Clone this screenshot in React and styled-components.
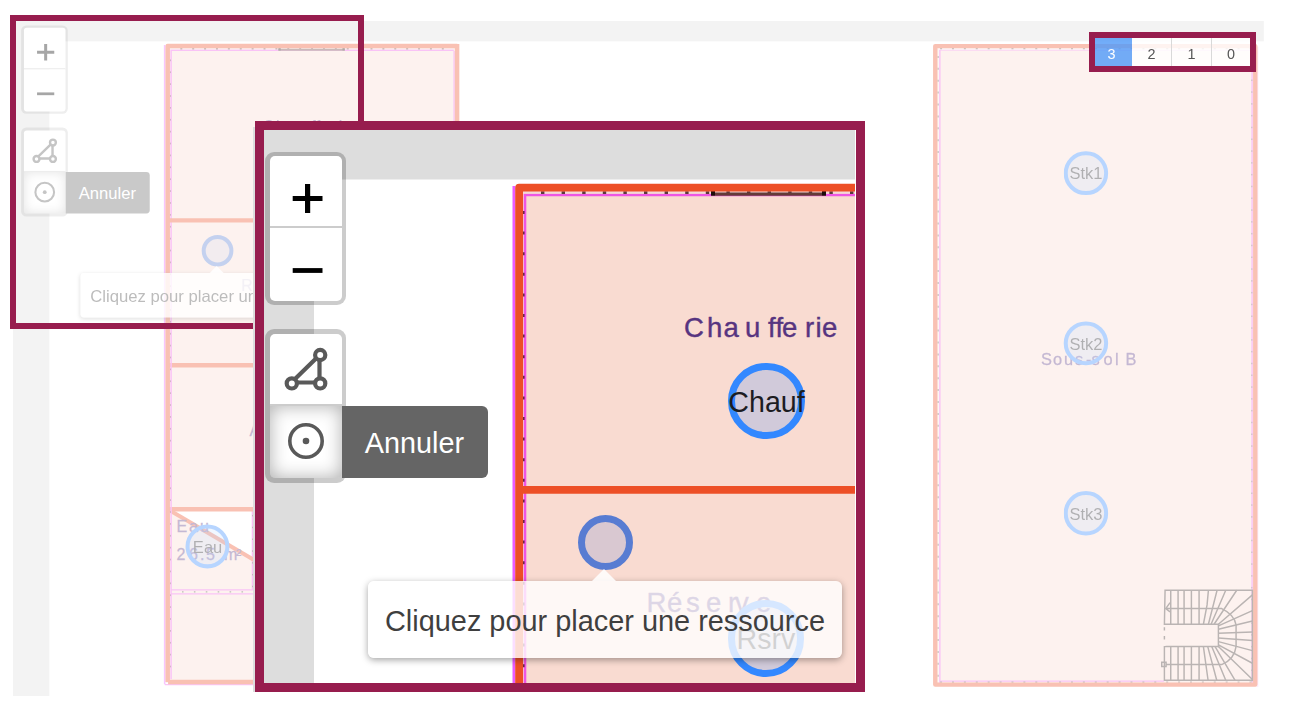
import React from "react";
import styled, { createGlobalStyle } from "styled-components";

const Global = createGlobalStyle`
  * { box-sizing: border-box; }
  body { margin: 0; background: #fff; font-family: "Liberation Sans", Arial, sans-serif; }
`;

const ACCENT = "#971d4e";
const WALL = "#ed4f26";
const MAGENTA = "#ee55e4";
const ROOM = "#f9dbd1";
const INK = "#573480";

const Page = styled.main`
  position: relative;
  width: 1292px;
  height: 712px;
  padding: 21px 28px 16px 13px;
  overflow: hidden;
  background: #fff;
`;

const FadedMap = styled.section`
  width: 1251px;
  height: 675px;
  overflow: hidden;
  opacity: 0.35;
`;

const Scene = styled.div`
  position: relative;
  width: 2168px;
  height: 1190px;
  margin: ${(p) => p.$margin};
  transform: scale(${(p) => p.$scale});
  transform-origin: 0 0;
`;

const PlanSvg = styled.svg`
  display: block;
  width: 100%;
  height: 100%;
`;

const Frame = styled.div`
  position: absolute;
  left: ${(p) => p.$x}px;
  top: ${(p) => p.$y}px;
  width: ${(p) => p.$w}px;
  height: ${(p) => p.$h}px;
  border: ${(p) => p.$line || 6}px solid ${ACCENT};
`;

const InsetFrame = styled(Frame)`
  &::before {
    content: "";
    position: absolute;
    left: -11px;
    top: -3px;
    bottom: -9px;
    width: 2px;
    background: #ddd;
  }
`;

const InsetView = styled.div`
  width: 100%;
  height: 100%;
  overflow: hidden;
  background: #fff;
  border-right: 1px solid #fff;
`;

const Controls = styled.div`
  position: absolute;
  left: 14px;
  top: 24.5px;
  display: flex;
  flex-direction: column;
  gap: 24px;
`;

const ButtonGroup = styled.div`
  display: flex;
  flex-direction: column;
  width: 81px;
  height: 153.5px;
  padding: 4.5px;
  border-radius: 9px;
  background: rgba(0, 0, 0, 0.2);
`;

const MapButton = styled.button`
  position: relative;
  flex: 0 0 50%;
  min-height: 0;
  display: grid;
  place-items: start center;
  padding: 0;
  border: 0;
  background: #fff;
  box-shadow: ${(p) => (p.$pressed ? "inset 0 0 18px rgba(0,0,0,0.32)" : "none")};
  &:first-child { border-radius: 5px 5px 0 0; border-bottom: 2px solid #ccc; }
  &:last-child { border-radius: 0 0 5px 5px; }
`;

const Glyph = styled.svg`
  display: block;
  width: 72px;
  height: 70px;
  overflow: visible;
`;

const Flyout = styled.span`
  position: absolute;
  left: 72px;
  top: 0;
  display: flex;
  align-items: center;
  justify-content: center;
  width: 146px;
  height: 72px;
  padding-top: 3px;
  border-radius: 0 6px 6px 0;
  background: #656565;
  color: #fff;
  font: 28.8px "Liberation Sans", Arial, sans-serif;
`;

const Marker = styled.div`
  position: absolute;
  left: ${(p) => p.$x - 251 - p.$r}px;
  top: ${(p) => p.$y - 127 - p.$r}px;
  width: ${(p) => p.$r * 2}px;
  height: ${(p) => p.$r * 2}px;
  display: flex;
  align-items: center;
  justify-content: center;
  padding-top: 3px;
  border: 7px solid ${(p) => (p.$pending ? "#587cd2" : "#3388ff")};
  border-radius: 50%;
  background: ${(p) => (p.$pending ? "rgba(88,124,210,0.2)" : "rgba(51,136,255,0.2)")};
  color: #1c1c22;
  font-size: 28.6px;
  white-space: nowrap;
`;

const Hint = styled.div`
  position: absolute;
  left: 117px;
  top: 454px;
  display: flex;
  align-items: center;
  justify-content: center;
  width: 474px;
  height: 77px;
  padding-top: 3px;
  border-radius: 6px;
  background: rgba(255, 255, 255, 0.8);
  box-shadow: 0 2px 7px rgba(0, 0, 0, 0.36);
  font-size: 28.9px;
  color: #3f3f3f;
  white-space: nowrap;
  &::before {
    content: "";
    position: absolute;
    left: 224px;
    bottom: 100%;
    border: 12px solid transparent;
    border-top: 0;
    border-bottom-color: rgba(255, 255, 255, 0.85);
  }
`;

const LevelPicker = styled(Frame)`
  display: flex;
`;

const Level = styled.button`
  flex: 0 0 ${(p) => p.$w}px;
  display: flex;
  align-items: center;
  justify-content: center;
  padding: ${(p) => (p.$active ? "4px 4px 0 0" : "4px 0 0")};
  border: 0;
  border-left: ${(p) => (p.$divided ? "1px solid #d9d9d9" : "0")};
  background: ${(p) => (p.$active ? "rgba(79,152,248,0.8)" : "rgba(255,255,255,0.8)")};
  color: ${(p) => (p.$active ? "#fff" : "#555")};
  font: 14.4px "Liberation Sans", Arial, sans-serif;
`;

const label = { fill: INK, stroke: INK, strokeWidth: 0.4, fontFamily: '"Liberation Sans", Arial, sans-serif' };

/* Flight of stairs in the lower right corner of the second building. */
function Stairs() {
  return (
    <g transform="translate(1140 570) scale(.33333)" fill="none" stroke="#3a2a26" strokeWidth="4.4">
      <path d="M337 61H75L73 163H235V230H73V331H337Z" />
      <path d="M73 165V228" stroke={ROOM} strokeWidth="7" />
      <path d="M73 172V182M73 198V209" />
      <path d="M92 61V163M114 61V163M132 61V163M154 61V163M177 61V163M92 230V331M114 230V331M132 230V331M154 230V331M177 230V331" />
      <path d="M205 61L201 105L190 163M231 61L205 163M257 61L213 163M290 61L222 163M337 75L235 163M337 122L235 168M337 153L235 178M337 186L235 190M337 212L235 204M337 242L235 215M337 280L235 225M337 329L235 230M285 331L225 230M257 331L215 230M230 331L203 230M204 331L190 230" />
      <path d="M76 116H245Q283 134 288 165V230Q283 268 245 284H78M90 98L77 116L90 126M65 277H78V290H65Z" />
    </g>
  );
}

/* Rooms and building that lie outside the magnified area. */
function OuterPlan() {
  return (
    <>
      <path d="M170 509H252V559Z" fill="#fff" />
      <path d="M171 590H253M171 594H253M252.3 511V590M164.7 684.8H457M454 51V680" fill="none" stroke={MAGENTA} strokeWidth="1.3" />
      <path d="M172 592H253" stroke="#443" strokeWidth="1.3" strokeDasharray="1.6 10.3" strokeDashoffset="2" />
      <path d="M252.5 515V590" stroke="#443" strokeWidth="1" strokeDasharray="1.5 10.3" />
      <g fill="none" stroke={WALL} strokeWidth="4.5">
        <path d="M457 44V684M168 365.3H457M168 509.3H457M168 682H457" />
        <path d="M169 510L254 560" strokeWidth="4" />
      </g>
      <g {...label} fontSize="16" strokeWidth="0.3">
        <text x="176.5 189 200" y="532">Eau</text>
        <text x="176.5 189 200 206 220 224 236" y="560.5">26.5 m²</text>
        <text x="249.5" y="436">A</text>
      </g>

      <rect x="935" y="46" width="320" height="639" fill={ROOM} />
      <path d="M939.8 683V50H1252V683M939 681.2H1164" fill="none" stroke={MAGENTA} strokeWidth="1.4" />
      <path d="M1257.7 47V687" stroke={MAGENTA} strokeOpacity="0.45" strokeWidth="1" />
      <path d="M938 49H1252M938 50V682" fill="none" stroke="#f8e6e2" strokeWidth="1.6" />
      <path d="M940 48.8H1252M938 56V682M940 682.2H1252" fill="none" stroke="#554a46" strokeWidth="1.3" strokeDasharray="2 9.9" />
      <path d="M1251.8 56V682" stroke="#554a46" strokeWidth="1" strokeDasharray="1.5 10.3" />
      <rect x="935.2" y="46.2" width="320" height="638.5" fill="none" stroke={WALL} strokeWidth="4.4" strokeLinejoin="round" />
      <Stairs />
      <text {...label} fontSize="16.4" strokeWidth="0.3" x="1041 1053 1064 1075 1086 1091.5 1103.5 1115 1121 1125.5" y="364.6">Sous-sol B</text>
    </>
  );
}

function Plan({ full }) {
  return (
    <PlanSvg viewBox="251 127 2168 1190">
      <rect x="251" y="127" width="2168" height="52.5" fill="#ddd" />
      <rect x="251" y="127" width="63" height="1190" fill="#ddd" />

      <g transform="translate(228.6 107.8) scale(1.7331)">
        <rect x="166" y="46" width="291" height="637" fill={ROOM} />
        {full && <OuterPlan />}
      </g>

      <path d="M513.9 186V1294" stroke="#ea5cff" strokeWidth="2.8" />
      <path d="M525 1285V195H1015" fill="none" stroke={MAGENTA} strokeWidth="2.6" />
      <path d="M523 192.4H1015" stroke="#f3d9d6" strokeWidth="2.2" />
      <path d="M541 192.6H1010" stroke="#5b3a3a" strokeWidth="2.6" strokeDasharray="3.4 17.2" />
      <path d="M523.8 211V1280" stroke="#6e2347" strokeWidth="1.6" strokeDasharray="3 17.6" />
      <path d="M711 194.2H826" stroke="#643b38" strokeWidth="3.2" />
      <path d="M711 193.3H715M822 193.3H826" stroke="#1c0d0b" strokeWidth="4.4" />
      <path d="M519.1 1290V187.7H1021" fill="none" stroke={WALL} strokeWidth="7.8" strokeLinejoin="round" />
      <path d="M520 489.9H1020" stroke={WALL} strokeWidth="7.6" />
      <g {...label} fontSize="27.5">
        <text x="684 707 723.5 745 768 775.5 782 805 815.5 822" y="336.8">Chaufferie</text>
        <text x="646.5 667 686 706 728 735 756" y="611.5">Réserve</text>
      </g>
    </PlanSvg>
  );
}

const INNER_MARKERS = [
  { x: 766.5, y: 401, text: "Chauf" },
  { x: 766, y: 638.5, text: "Rsrv" },
];

const OUTER_MARKERS = [
  { x: 588.2, y: 1055, text: "Eau" },
  { x: 2110.7, y: 408.2, text: "Stk1" },
  { x: 2110.7, y: 702.8, text: "Stk2" },
  { x: 2110.7, y: 997.6, text: "Stk3" },
];

function MapControls() {
  return (
    <Controls>
      <ButtonGroup>
        <MapButton>
          <Glyph viewBox="0 0 72 70"><path d="M22.7 42.5H52.5M37.6 28V57" stroke="#000" strokeWidth="5.2" /></Glyph>
        </MapButton>
        <MapButton>
          <Glyph viewBox="0 0 72 70"><path d="M22.7 42.5H52.5" stroke="#000" strokeWidth="4.8" /></Glyph>
        </MapButton>
      </ButtonGroup>
      <ButtonGroup>
        <MapButton>
          <Glyph viewBox="0 0 72 70" fill="none" stroke="#595959" strokeWidth="4.2">
            <path d="M25 45L46 24.5M49.5 26V44M27 48.5H45" />
            <g fill="#fff">
              <circle cx="50.2" cy="21" r="5.1" />
              <circle cx="50.2" cy="49.4" r="5.1" />
              <circle cx="21.8" cy="49.4" r="5.1" />
            </g>
          </Glyph>
        </MapButton>
        <MapButton $pressed>
          <Glyph viewBox="0 0 72 70">
            <circle cx="36" cy="35" r="16.2" fill="none" stroke="#595959" strokeWidth="3.6" />
            <circle cx="36" cy="35" r="3.3" fill="#595959" />
          </Glyph>
          <Flyout>Annuler</Flyout>
        </MapButton>
      </ButtonGroup>
    </Controls>
  );
}

function MapScene({ scale, margin, full }) {
  const markers = full ? [...INNER_MARKERS, ...OUTER_MARKERS] : INNER_MARKERS;
  return (
    <Scene $scale={scale} $margin={margin}>
      <Plan full={full} />
      {markers.map((m) => (
        <Marker key={m.text} $x={m.x} $y={m.y} $r={38.3}>{m.text}</Marker>
      ))}
      <Marker $pending $x={605.5} $y={542.6} $r={27.5} />
      <Hint>Cliquez pour placer une ressource</Hint>
      <MapControls />
    </Scene>
  );
}

export default function App() {
  return (
    <Page>
      <Global />
      <FadedMap>
        <MapScene full scale={0.577} margin="-10px 0 0 0" />
      </FadedMap>
      <Frame $x={10} $y={15} $w={354} $h={314} />
      <LevelPicker $x={1089} $y={32} $w={167} $h={40}>
        <Level $active $w={37}>3</Level>
        <Level $w={39}>2</Level>
        <Level $divided $w={40}>1</Level>
        <Level $divided $w={39}>0</Level>
      </LevelPicker>
      <InsetFrame $x={255} $y={121} $w={610} $h={571} $line={9}>
        <InsetView>
          <MapScene scale={1} margin="-3px 0 0 -13px" />
        </InsetView>
      </InsetFrame>
    </Page>
  );
}
